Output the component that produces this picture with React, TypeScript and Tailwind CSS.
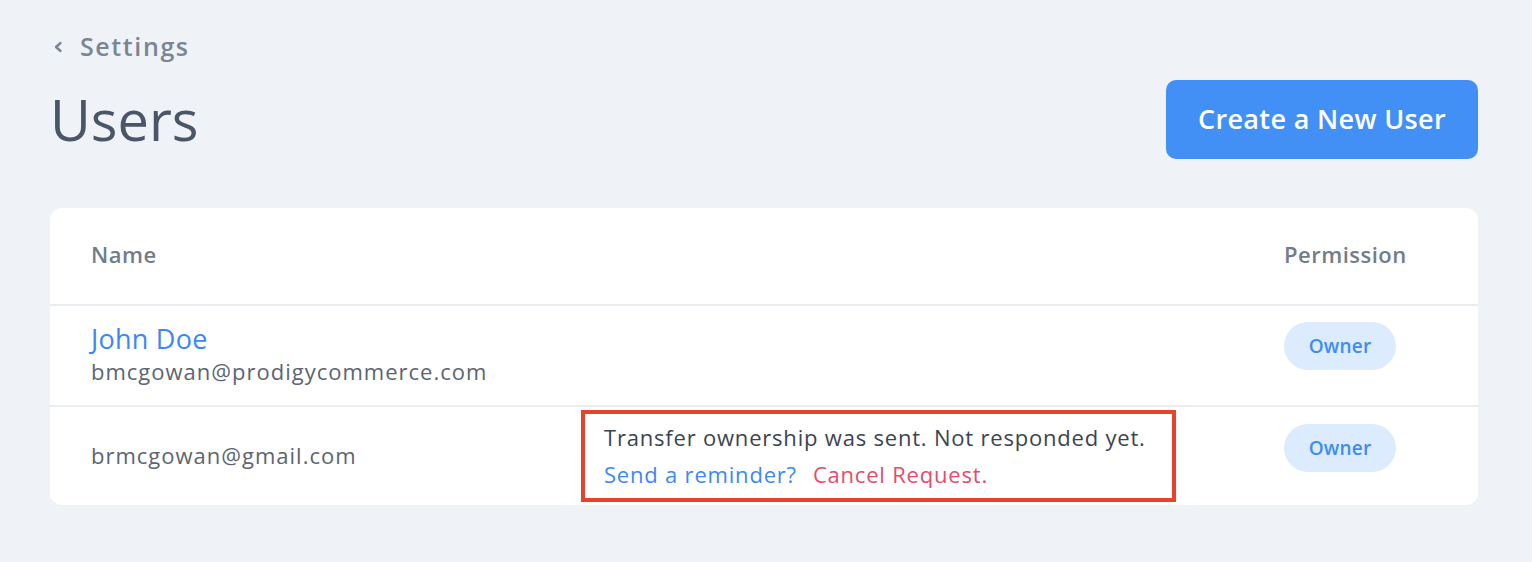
import React from 'react';

const font = { fontFamily: '"Open Sans", "Noto Sans", sans-serif' };

const OwnerPill: React.FC = () => (
    <span className="inline-flex items-center justify-center w-[112px] h-[48px] rounded-full bg-[#dcebfd] text-[#3f8cf4] text-[19px] font-semibold tracking-[0.2px]">
        Owner
    </span>
);

const App: React.FC = () => {
    return (
        <div className="min-h-[562px] w-full bg-[#eff3f7] pl-[50px] pr-[54px] pt-[30px] pb-[56px]" style={font}>
            {/* Back link */}
            <div className="flex items-center gap-[16px] h-[34px] text-[#7b8593]">
                <svg width="12" height="14" viewBox="0 0 12 14" className="ml-[2px]">
                    <path d="M8.5 3 L4 7 L8.5 11" fill="none" stroke="#7b8593" strokeWidth="2.4" strokeLinecap="round" strokeLinejoin="round" />
                </svg>
                <span className="text-[25px] font-semibold tracking-[1.6px]">Settings</span>
            </div>

            {/* Title row */}
            <div className="flex items-center justify-between mt-[16px]">
                <h1 className="text-[56px] leading-[79px] text-[#4a5567] font-normal">Users</h1>
                <button className="w-[312px] h-[79px] rounded-[10px] bg-[#4290f5] text-white text-[27px] font-semibold tracking-[0.35px]">
                    Create a New User
                </button>
            </div>

            {/* Users table */}
            <div className="mt-[49px] bg-white rounded-[12px] overflow-hidden">
                <div className="flex items-center h-[96px] pb-[3px] px-[41px] text-[22px] font-semibold text-[#727d8b] tracking-[0.5px]">
                    <div className="flex-1">Name</div>
                    <div className="w-[153px]">Permission</div>
                </div>

                <div className="flex items-start h-[101px] px-[41px] pt-[16px] border-t-2 border-[#e9edf2]">
                    <div className="flex-1 flex flex-col">
                        <span className="text-[27px] leading-[34px] text-[#3d87f5] tracking-[0.25px]">John Doe</span>
                        <span className="text-[22px] leading-[31px] text-[#5c6573] tracking-[1px]">bmcgowan@prodigycommerce.com</span>
                    </div>
                    <div className="w-[153px]">
                        <OwnerPill />
                    </div>
                </div>

                <div className="flex items-start h-[100px] px-[41px] border-t-2 border-[#e9edf2]">
                    <div className="w-[490px] h-full pb-[2px] flex items-center text-[22px] text-[#5c6573] tracking-[1px]">brmcgowan@gmail.com</div>
                    <div className="w-[595px] h-[92px] mt-[3px] border-4 border-[#e5432b] pl-[19px] pt-[5px] flex flex-col">
                        <span className="text-[22px] leading-[36px] text-[#3c4452] tracking-[0.8px]">Transfer ownership was sent. Not responded yet.</span>
                        <span className="text-[22px] leading-[38px] flex gap-[16px] tracking-[0.8px]">
                            <span className="text-[#3e88f4]">Send a reminder?</span>
                            <span className="text-[#e54c6c]">Cancel Request.</span>
                        </span>
                    </div>
                    <div className="flex-1" />
                    <div className="w-[153px] pt-[17px]">
                        <OwnerPill />
                    </div>
                </div>
            </div>
        </div>
    );
};

export default App;
